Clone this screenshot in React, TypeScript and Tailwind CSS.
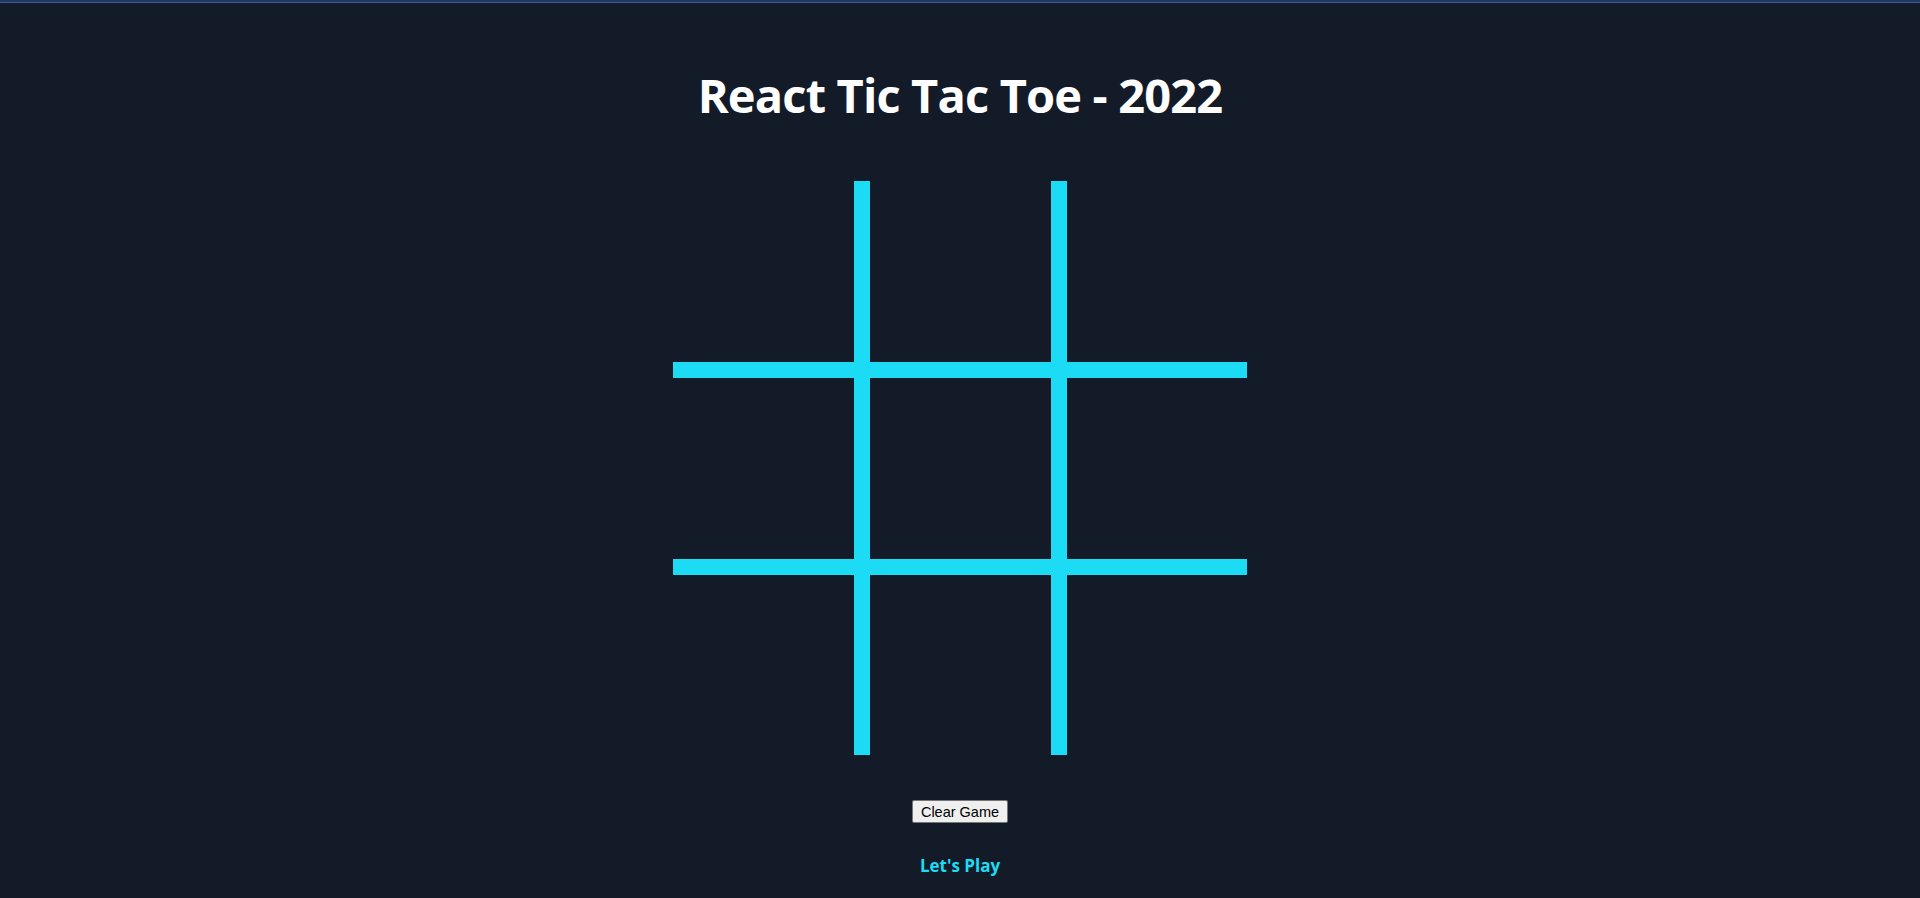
export default function App() {
  const cells = Array.from({ length: 9 });
  return (
    <div className="min-h-[898px] bg-[#141b28] flex flex-col items-center" style={{ fontFamily: '"Open Sans", "Noto Sans", sans-serif' }}>
      <div className="w-full h-[2px] bg-[#1d3862] border-b border-[#3e5d8c] box-content" />
      <h1 className="mt-[63px] text-[47px] leading-[58px] font-bold text-white tracking-[-0.85px]">React Tic Tac Toe - 2022</h1>
      <div className="mt-[57px] grid grid-cols-[181px_181px_180px] grid-rows-[181px_181px_180px] gap-4 bg-[#1cdcf5]">
        {cells.map((_, i) => (
          <div key={i} className="bg-[#141b28]" />
        ))}
      </div>
      <button
        className="mt-[45px] h-[23px] w-[96px] bg-[#efefef] border border-[#767676] rounded-[2px] text-[14.5px] leading-none text-black pt-px"
        style={{ fontFamily: '"Liberation Sans", Arial, sans-serif' }}
      >
        Clear Game
      </button>
      <p className="mt-[31px] text-[17px] leading-6 font-bold text-[#1cdcf5]">Let's Play</p>
    </div>
  );
}
